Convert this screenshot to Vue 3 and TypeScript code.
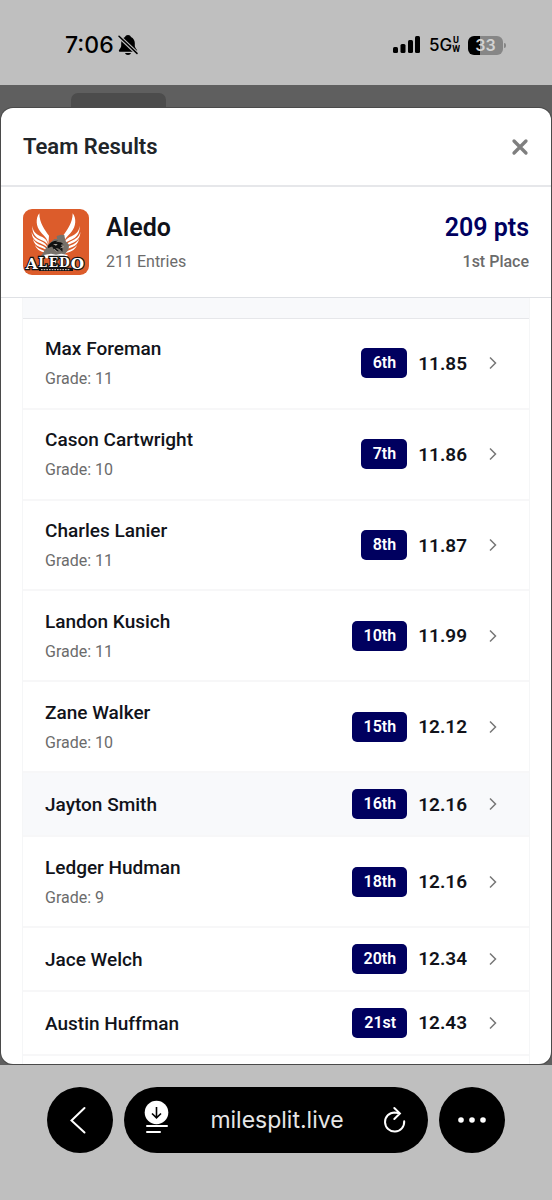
<script setup lang="ts">
interface Athlete {
  name: string
  grade?: number
  place: string
  mark: string
  shaded?: boolean
}

const athletes: Athlete[] = [
  { name: 'Max Foreman', grade: 11, place: '6th', mark: '11.85' },
  { name: 'Cason Cartwright', grade: 10, place: '7th', mark: '11.86' },
  { name: 'Charles Lanier', grade: 11, place: '8th', mark: '11.87' },
  { name: 'Landon Kusich', grade: 11, place: '10th', mark: '11.99' },
  { name: 'Zane Walker', grade: 10, place: '15th', mark: '12.12' },
  { name: 'Jayton Smith', place: '16th', mark: '12.16', shaded: true },
  { name: 'Ledger Hudman', grade: 9, place: '18th', mark: '12.16' },
  { name: 'Jace Welch', place: '20th', mark: '12.34' },
  { name: 'Austin Huffman', place: '21st', mark: '12.43' },
]
</script>

<template>
  <div class="screen">
    <header class="status">
      <div class="clock">
        <span>7:06</span>
        <svg class="bell" viewBox="0 0 20 22" aria-hidden="true">
          <path d="M10 1C8.500 1 7.400 1.800 7 3 4.600 4.100 3.300 6.300 3.200 9v2.600c0 1.700-.7 2.700-1.800 3.800-1 1.100-.6 2.400.8 2.400h15.600c1.400 0 1.800-1.300.8-2.400-1.100-1.100-1.800-2.100-1.800-3.800V9c-.1-2.700-1.400-4.900-3.800-6-.4-1.200-1.500-2-3-2z" />
          <path d="M7 19h6c-.4 1.200-1.500 1.900-3 1.900S7.400 20.200 7 19z" />
          <path d="M1 2.300 19.500 19.800" stroke="#bfbfbf" stroke-width="3.800" />
          <path d="M1 2.300 19 19.400" stroke="#000" stroke-width="1.500" stroke-linecap="round" />
        </svg>
      </div>
      <div class="signals">
        <svg class="bars" viewBox="0 0 28 18" aria-hidden="true">
          <rect x="0" y="11" width="5" height="6" rx="1.500" />
          <rect x="7.500" y="8" width="5" height="9" rx="1.500" />
          <rect x="15" y="4" width="5" height="13" rx="1.500" />
          <rect x="22" y="0" width="5" height="17" rx="1.500" />
        </svg>
        <span class="network">5G</span>
        <span class="band"><span>U</span><span>W</span></span>
        <span class="battery"><span class="level">33</span></span>
      </div>
    </header>

    <main class="backdrop">
      <div class="tab"></div>
      <section class="modal" role="dialog" aria-labelledby="dialog-title">
        <div class="modal-head">
          <h1 id="dialog-title">Team Results</h1>
          <button class="close" type="button" aria-label="Close">
            <svg viewBox="0 0 16 16" aria-hidden="true"><path d="M2.700 2.700l10.600 10.600M13.300 2.700 2.700 13.300" /></svg>
          </button>
        </div>

        <div class="team">
          <svg class="logo" viewBox="70 266 198 198" role="img" aria-label="Aledo">
            <rect x="70" y="266" width="198" height="198" fill="#dc5c2b" />
            <g id="wing" fill="#fff">
              <path d="M119 279c-12 15-10 40 4 56 10 12 20 18 23 36l2-25c-13-17-29-39-29-67z" />
              <path d="M98 316c2 20 14 27 30 34 10 5 15 12 17 24-6-9-12-12-22-16-16-7-26-19-25-42z" />
              <path d="M96 335c4 15 14 21 27 27 11 5 18 10 22 22-9-10-16-12-25-16-15-6-24-16-24-33z" />
              <path d="M100 355c5 11 13 15 24 20 10 4 16 8 20 17-9-7-16-9-24-12-11-5-18-12-20-25z" />
              <path d="M106 374c6 8 13 11 20 14 8 3 13 6 17 12-9-4-15-5-21-8-8-4-13-9-16-18z" />
            </g>
            <use href="#wing" transform="translate(338 0) scale(-1 1)" />
            <path d="M164 356l8 0-1-9 13-4 10 1 3 17 11 12-1 13-10 14-2 11-9 2-40-1-24-3 10-14 13-22z" fill="#77716a" />
            <path d="M132 404l22-4 15 3 16-3 20 4-8 10h-58z" fill="#fff" />
            <path d="M145 376c6-10 17-16 30-15-4 2-5 3-6 5 9-3 17-1 23 6-5-1-7 0-9 2 5 4 7 12 5 21-5-8-12-12-20-12l10 10c-9-1-17-5-20-14-5 0-9 2-12 5-1-3-1-5-1-8z" fill="#111" />
            <path d="M160 371l14 0-5 5z" fill="#a9a39b" />
            <path d="M163 386l8 7M182 383l10-4" stroke="#c9c3bd" stroke-width="2" />
            <path d="M118 442h102v10h-102z" fill="#111" />
            <g class="wordmark">
              <text x="78" y="446" font-size="46">A</text>
              <text x="116 147 178" y="439" font-size="37">LED</text>
              <text x="213" y="446" font-size="46">O</text>
            </g>
            <path d="M124 448h86" stroke="#e8d6cc" stroke-width="3" stroke-dasharray="5 3" />
          </svg>
          <div class="team-name">
            <h2>Aledo</h2>
            <p>211 Entries</p>
          </div>
          <div class="team-score">
            <strong>209 pts</strong>
            <p>1st Place</p>
          </div>
        </div>

        <div class="results">
          <div class="group-head"></div>
          <ul>
            <li v-for="a in athletes" :key="a.name" :class="{ tall: a.grade, shaded: a.shaded }">
              <button class="row" type="button">
                <span class="who">
                  <span class="name">{{ a.name }}</span>
                  <span v-if="a.grade" class="grade">Grade: {{ a.grade }}</span>
                </span>
                <span class="place">{{ a.place }}</span>
                <span class="mark">{{ a.mark }}</span>
                <svg class="chevron" viewBox="0 0 29 14" aria-hidden="true"><path d="M12 1.500l5.500 5.500-5.500 5.500" /></svg>
              </button>
            </li>
          </ul>
          <div class="next"></div>
        </div>
      </section>
    </main>

    <nav class="browser">
      <button class="round" type="button" aria-label="Back">
        <svg viewBox="0 0 66 66" aria-hidden="true"><path d="M37.500 21 24.500 33.500l13 12" /></svg>
      </button>
      <div class="pill">
        <button type="button" aria-label="Page menu">
          <svg class="download" viewBox="0 0 26 38" aria-hidden="true">
            <circle cx="12.500" cy="11.500" r="11.800" fill="#fff" />
            <path d="M12.500 6v10.500M8 12.500l4.500 4.300 4.500-4.300" stroke="#000" stroke-width="1.600" />
            <path d="M3 25h20M3 31h13" stroke="#fff" stroke-width="2" stroke-linecap="round" />
          </svg>
        </button>
        <a href="https://milesplit.live">milesplit.live</a>
        <button type="button" aria-label="Reload">
          <svg class="reload" viewBox="0 0 22 26" aria-hidden="true">
            <path d="M20.200 14.300a9.600 9.600 0 1 1-9.600-8.900l5 .8M10.300 1l5.600 5.400-5.600 5.600" />
          </svg>
        </button>
      </div>
      <button class="round" type="button" aria-label="More">
        <svg viewBox="0 0 66 66" aria-hidden="true">
          <g class="dots"><circle cx="22" cy="33" r="2.800" /><circle cx="33" cy="33" r="2.800" /><circle cx="44" cy="33" r="2.800" /></g>
        </svg>
      </button>
    </nav>
  </div>
</template>

<style>
body {
  background: #bfbfbf;
}
</style>

<style scoped>
* {
  box-sizing: border-box;
}
.screen {
  min-height: 100vh;
  display: flex;
  flex-direction: column;
  background: #bfbfbf;
  font-family: Roboto, "Liberation Sans", sans-serif;
  color: #11131a;
}
h1,
h2,
p,
ul {
  margin: 0;
  padding: 0;
}
svg {
  display: block;
  flex: none;
  overflow: visible;
}
button {
  font: inherit;
  color: inherit;
  border: 0;
  padding: 0;
  background: none;
  cursor: pointer;
}

.status {
  height: 85px;
  padding: 5px 49px 0 65px;
  display: flex;
  align-items: center;
  justify-content: space-between;
  font-family: Inter, "Liberation Sans", sans-serif;
  color: #000;
}
.clock {
  display: flex;
  align-items: center;
  gap: 4px;
  font-size: 23px;
  font-weight: 500;
}
.bell {
  width: 20px;
  height: 22px;
}
.signals {
  display: flex;
  align-items: center;
}
.bars {
  width: 28px;
  height: 18px;
}
.network {
  margin-left: 8px;
  font-size: 17px;
  font-weight: 500;
}
.band {
  display: flex;
  flex-direction: column;
  align-items: center;
  font-family: Roboto, "Liberation Sans", sans-serif;
  font-size: 9px;
  line-height: 9px;
  font-weight: 700;
}
.band span {
  height: 9px;
  overflow: hidden;
}
.battery {
  position: relative;
  width: 35px;
  height: 19px;
  margin-left: 8px;
  border-radius: 6px;
  background: linear-gradient(90deg, #000 12px, #868686 12px);
  color: #d2d2d2;
  font-size: 16px;
  line-height: 19px;
  font-weight: 600;
  text-align: center;
}
.battery::after {
  content: "";
  position: absolute;
  left: 36px;
  top: 7px;
  width: 2px;
  height: 5px;
  border-radius: 0 2px 2px 0;
  background: #868686;
}

.backdrop {
  flex: 1;
  display: flex;
  flex-direction: column;
  padding: 8px 1px 1px;
  background: #5f5f5f;
}
.tab {
  width: 95px;
  height: 15px;
  margin-left: 70px;
  border-radius: 7px 7px 0 0;
  background: #4c4c4c;
}
.modal {
  flex: 1;
  display: flex;
  flex-direction: column;
  border-radius: 12px;
  background: #fff;
  box-shadow: 0 0 0 1px #4a4a4a;
  overflow: hidden;
}
.modal-head {
  height: 79px;
  padding: 0 22px;
  display: flex;
  align-items: center;
  justify-content: space-between;
  border-bottom: 2px solid #e6e7ea;
}
h1 {
  font-size: 22px;
  line-height: 28px;
  font-weight: 600;
  color: #212529;
}
.close svg {
  width: 18px;
  height: 18px;
  fill: none;
  stroke: #7f7f7f;
  stroke-width: 3;
  stroke-linecap: round;
}
.team {
  height: 111px;
  padding: 0 22px;
  display: flex;
  align-items: center;
  gap: 17px;
  border-bottom: 1px solid #dfe1e5;
}
.logo {
  width: 66px;
  height: 66px;
  border-radius: 9px;
  overflow: hidden;
}
.wordmark {
  font-family: "DejaVu Serif", serif;
  font-weight: 700;
  fill: #fff;
  stroke: #111;
  stroke-width: 7;
  paint-order: stroke;
}
.team-name,
.team-score {
  padding-top: 4px;
}
.team-name {
  flex: 1;
}
.team-score {
  text-align: right;
}
h2,
.team-score strong {
  display: block;
  font-size: 25px;
  line-height: 36px;
  font-weight: 600;
}
.team-score strong {
  color: #00005f;
}
.team p {
  font-size: 16px;
  line-height: 32px;
  color: #6b6b6b;
}
.team .team-score p {
  font-weight: 500;
}

.results {
  flex: 1;
  display: flex;
  flex-direction: column;
  margin: 0 21px;
  border: solid #f5f6f7;
  border-width: 0 1px;
}
.group-head {
  height: 21px;
  background: #f8f9fb;
  border-bottom: 1px solid #e6e7ea;
}
ul {
  flex: 1;
  display: flex;
  flex-direction: column;
  list-style: none;
}
li {
  flex: 1 0 auto;
  min-height: 64px;
  display: flex;
  border-bottom: 2px solid #f7f7f8;
}
li.tall {
  min-height: 90px;
}
.shaded {
  background: #f8f9fb;
}
.row {
  flex: 1;
  display: flex;
  align-items: center;
  gap: 11px;
  padding: 0 22px;
  text-align: left;
}
.who {
  flex: 1;
  padding-top: 2px;
}
.name,
.grade {
  display: block;
  line-height: 30px;
}
.name {
  font-size: 19px;
  font-weight: 500;
}
.grade {
  font-size: 16px;
  color: #6b6b6b;
}
.place {
  padding: 0 11px 0 12px;
  border-radius: 5px;
  background: #00005f;
  color: #fff;
  font-size: 16px;
  line-height: 30px;
  font-weight: 600;
}
.mark {
  font-size: 19px;
  font-weight: 600;
}
.chevron {
  width: 29px;
  height: 14px;
  fill: none;
  stroke: #777;
  stroke-width: 1.5;
}
.next {
  height: 8px;
}

.browser {
  display: flex;
  gap: 11px;
  padding: 22px 47px 47px;
}
.round {
  width: 66px;
  height: 66px;
  border-radius: 50%;
  background: #000;
}
.round svg {
  fill: none;
  stroke: #fff;
  stroke-width: 2;
  stroke-linecap: round;
}
.round .dots {
  fill: #fff;
  stroke: none;
}
.pill {
  flex: 1;
  display: flex;
  align-items: center;
  justify-content: space-between;
  height: 66px;
  padding: 0 22px 0 20px;
  border-radius: 33px;
  background: #000;
}
.pill a {
  font-family: Inter, "Liberation Sans", sans-serif;
  font-size: 23px;
  color: #e6e6e6;
  text-decoration: none;
}
.download {
  width: 26px;
  height: 38px;
  fill: none;
}
.reload {
  width: 22px;
  height: 26px;
  fill: none;
  stroke: #fff;
  stroke-width: 2;
  stroke-linecap: round;
}
</style>
